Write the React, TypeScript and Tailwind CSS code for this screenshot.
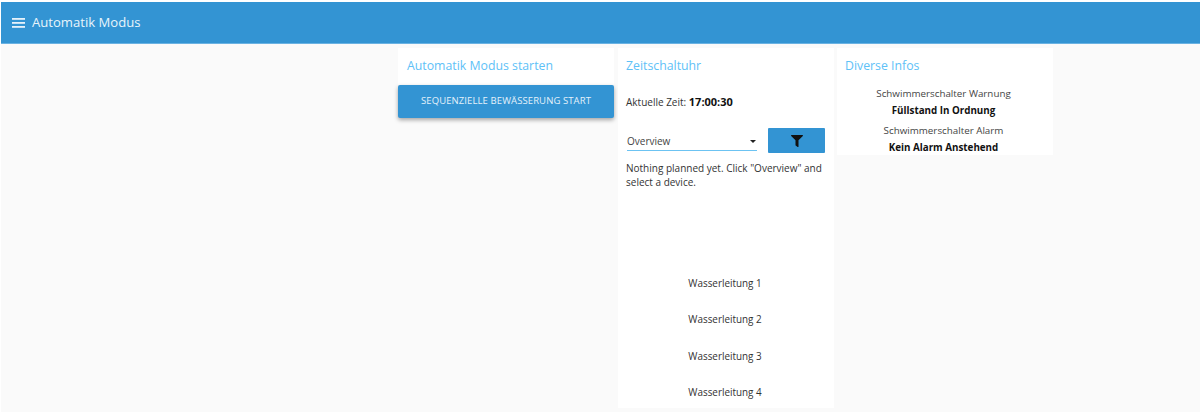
import { FaFilter } from "react-icons/fa";

const font = { fontFamily: '"Open Sans", "Noto Sans", sans-serif' };

const Pipe = ({ label }: { label: string }) => (
  <div className="h-[36.5px] pr-[2px] flex items-center justify-center text-[9.9px] text-[#333]">{label}</div>
);

const Title = ({ children }: { children: string }) => (
  <h2 className="h-[37px] pt-[8px] pl-[8px] text-[12.3px] leading-[20px] text-[#5ec1f7]">{children}</h2>
);

export default function App() {
  return (
    <div className="w-[1200px] h-[418px] bg-white overflow-hidden pt-[2px]" style={font}>
      <header className="ml-[1px] h-[42px] bg-[#3394d3] border-b border-[#6ab2e2] flex items-center pl-[11px] gap-[7px] text-white">
        <svg width="13" height="10" viewBox="0 0 13 10" fill="#e6f2fa">
          <rect y="0" width="13" height="1.8" />
          <rect y="4" width="13" height="1.8" />
          <rect y="8" width="13" height="1.8" />
        </svg>
        <span className="text-[13.1px] text-[#e8f4fb]">Automatik Modus</span>
      </header>

      <main className="h-[368px] ml-[1px] bg-[#fafafa] flex pt-[4px] pl-[397px] gap-[4px]">
        <section className="w-[216px]">
          <div className="bg-white pl-[1px]">
            <Title>Automatik Modus starten</Title>
          </div>
          <button className="w-[216px] h-[33px] bg-[#3394d3] rounded-[2px] shadow-[0_2px_4px_rgba(0,0,0,0.35)] text-[9.5px] text-[#e4f1fa] tracking-[0.1px]">
            SEQUENZIELLE BEWÄSSERUNG START
          </button>
        </section>

        <section className="w-[216px] h-[360px] bg-white">
          <Title>Zeitschaltuhr</Title>
          <p className="pl-[8px] mt-[9px] text-[10px] leading-[16px] text-[#333]">
            Aktuelle Zeit: <b className="text-[11px] text-[#111]">17:00:30</b>
          </p>
          <div className="flex mt-[18px] pl-[9px] items-center">
            <div className="w-[130px] h-[20px] pt-[2px] flex items-center justify-between border-b border-[#6cc3f2] text-[10px] text-[#444]">
              <span>Overview</span>
              <span className="mr-[1px] w-0 h-0 border-x-[3.5px] border-x-transparent border-t-[3.5px] border-t-[#222]" />
            </div>
            <button className="ml-[11px] w-[57px] h-[25px] bg-[#3394d3] rounded-[1px] flex items-center justify-center">
              <FaFilter className="w-[12px] h-[12px] text-[#111]" />
            </button>
          </div>
          <p className="pl-[8px] pr-[8px] mt-[8px] text-[10px] leading-[14px] text-[#333]">
            Nothing planned yet. Click "Overview" and select a device.
          </p>
          <div className="mt-[76px]">
            <Pipe label="Wasserleitung 1" />
            <Pipe label="Wasserleitung 2" />
            <Pipe label="Wasserleitung 3" />
            <Pipe label="Wasserleitung 4" />
          </div>
        </section>

        <section className="w-[216px] -ml-[1px] h-[107px] bg-white">
          <Title>Diverse Infos</Title>
          <div className="pr-[3px] text-center text-[9.8px] text-[#444] leading-[17px]">
            <div>Schwimmerschalter Warnung</div>
            <div className="font-bold text-[#111]">Füllstand In Ordnung</div>
            <div className="mt-[3px]">Schwimmerschalter Alarm</div>
            <div className="font-bold text-[#111]">Kein Alarm Anstehend</div>
          </div>
        </section>
      </main>
    </div>
  );
}
